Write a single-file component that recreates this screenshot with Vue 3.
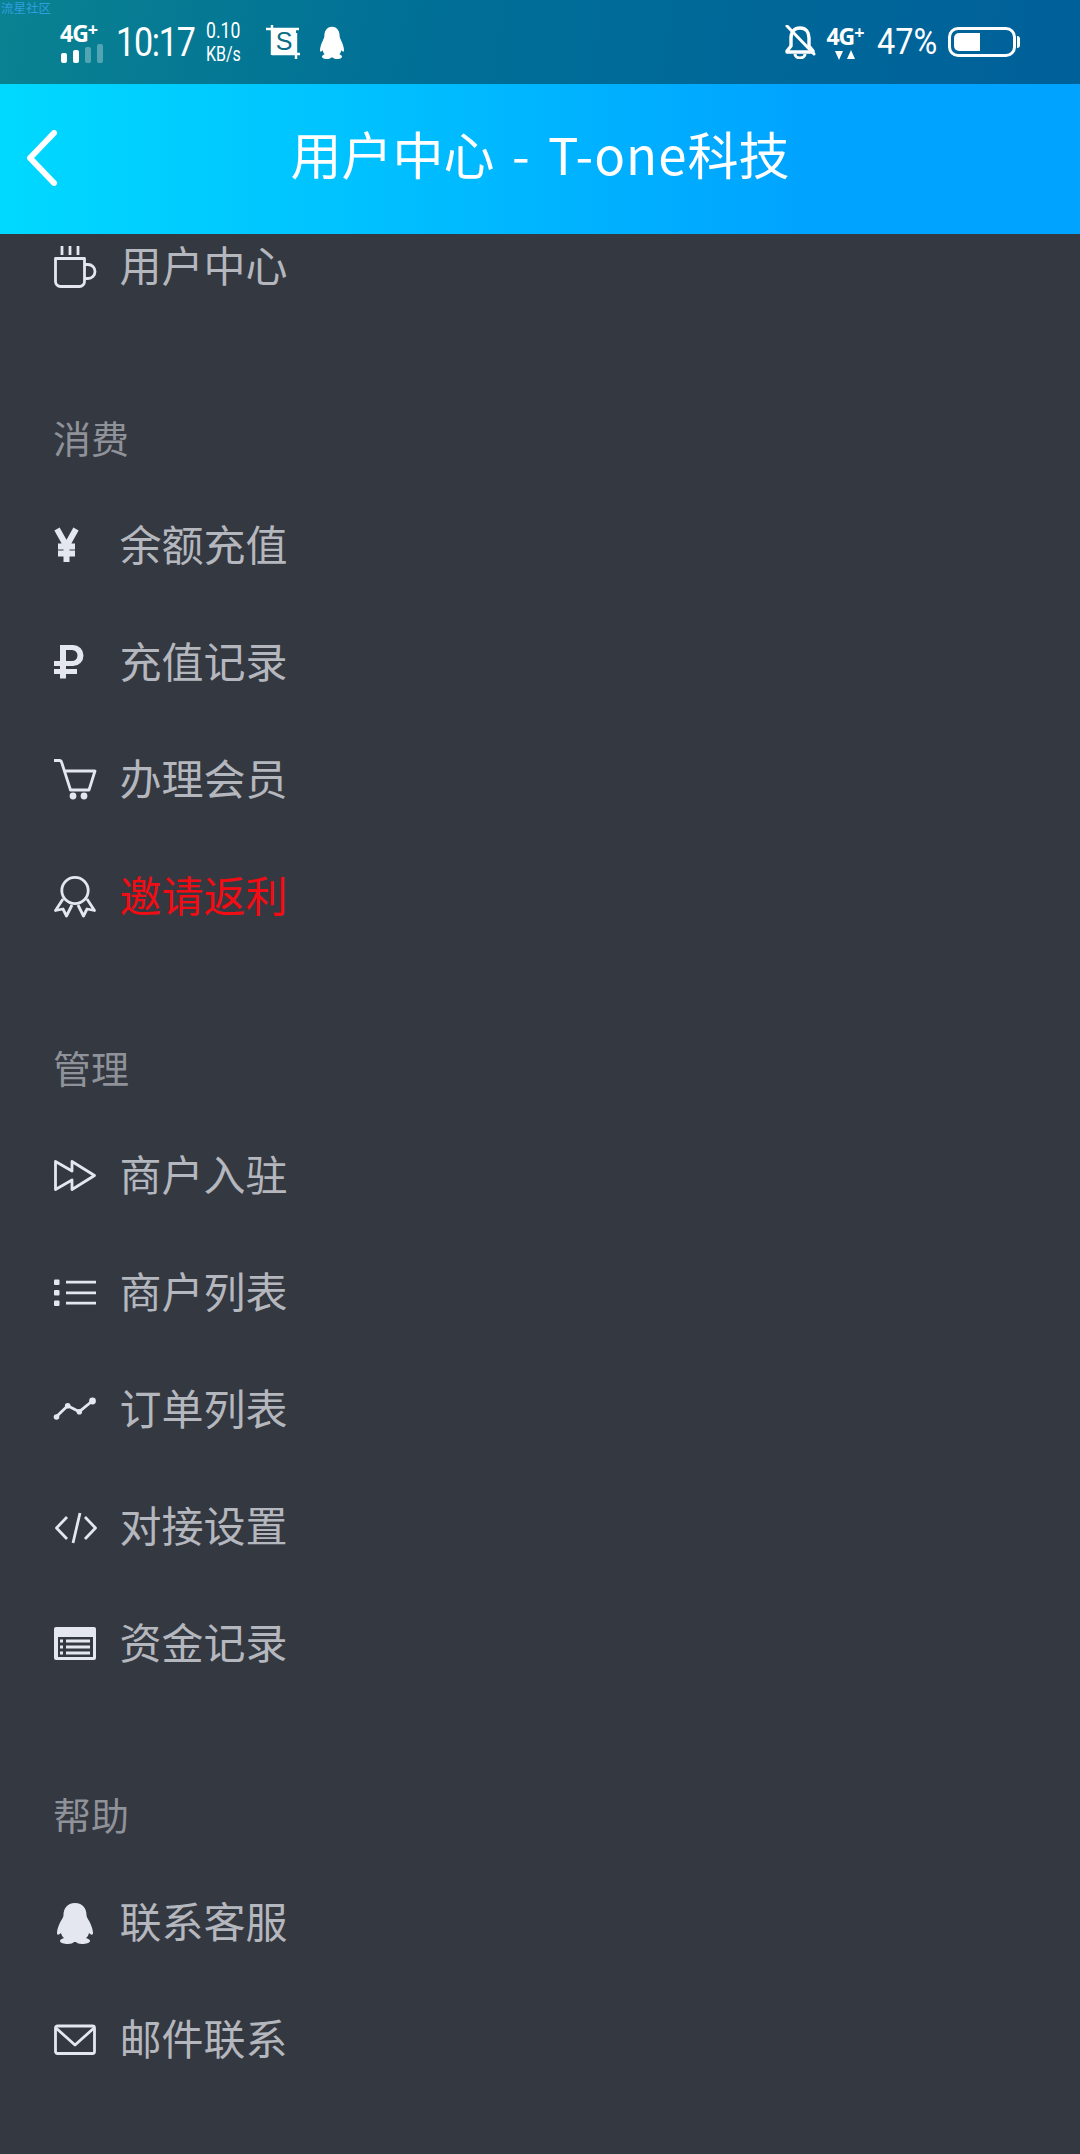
<template>
  <div class="page">
    <span class="watermark">流星社区</span>

    <div class="status-bar">
      <div class="status-group">
        <div class="network">
          <div class="net-type">4G<sup>+</sup></div>
          <svg class="signal" width="44" height="19" viewBox="0 0 44 19">
            <rect x="1" y="9" width="6" height="10" rx="2" fill="#fff" />
            <rect x="13" y="6" width="6" height="13" rx="2" fill="#fff" />
            <rect x="25" y="3" width="6" height="16" rx="2" fill="#fff" fill-opacity="0.3" />
            <rect x="37" y="0" width="6" height="19" rx="2" fill="#fff" fill-opacity="0.3" />
          </svg>
        </div>
        <span class="clock">10:17</span>
        <div class="speed">
          <span class="speed-val">0.10</span>
          <span class="speed-unit">KB/s</span>
        </div>
        <svg class="crop-icon" width="34" height="34" viewBox="0 0 34 34">
          <path d="M0 4h33M6 0v30M6 29h28M30 8v26" fill="none" stroke="#fff" stroke-width="2.4" />
          <rect x="6" y="4" width="24" height="25" fill="#fff" />
          <text x="18" y="25" text-anchor="middle" class="crop-s">S</text>
        </svg>
        <svg class="qq-status" width="28" height="33" viewBox="0 0 42 42" preserveAspectRatio="none">
          <path :d="penguin" fill="#fff" />
        </svg>
      </div>
      <div class="status-group">
        <svg class="bell" width="32" height="34" viewBox="0 0 32 34">
          <path d="M16 3c-6 0-9 4-9 10v8l-4 5v1h26v-1l-4-5v-8c0-6-3-10-9-10z" fill="none" stroke="#fff" stroke-width="3.4" stroke-linejoin="round" />
          <path d="M11 29a5 4 0 0 0 10 0" fill="none" stroke="#fff" stroke-width="3" />
          <path d="M3 1l27 28" stroke="#fff" stroke-width="3" stroke-linecap="round" />
        </svg>
        <div class="network right">
          <div class="net-type">4G<sup>+</sup></div>
          <svg width="20" height="10" viewBox="0 0 20 10">
            <polygon points="0,1 8,1 4,10" fill="#fff" />
            <polygon points="12,9 20,9 16,0" fill="#fff" />
          </svg>
        </div>
        <span class="battery-text">47%</span>
        <div class="battery">
          <div class="battery-fill" :style="{ width: batteryLevel + '%' }"></div>
        </div>
        <div class="battery-cap"></div>
      </div>
    </div>

    <header class="app-header">
      <svg class="back" width="34" height="56" viewBox="0 0 34 56">
        <path d="M28 3L4 28l24 25" fill="none" stroke="#fff" stroke-width="6" stroke-linecap="round" stroke-linejoin="round" />
      </svg>
      <h1 class="header-title">用户中心<span class="latin"> - T-one</span>科技</h1>
    </header>

    <main class="menu">
      <section v-for="(group, i) in groups" :key="i" class="group">
        <div v-if="group.title" class="group-title">{{ group.title }}</div>
        <a v-for="item in group.items" :key="item.label" class="row">
          <svg class="icon" width="42" height="42" viewBox="0 0 42 42">
            <g v-if="item.icon === 'cup'" class="line">
              <path d="M1.500 12.500h29v23a5 5 0 0 1-5 5h-19a5 5 0 0 1-5-5z" />
              <path d="M30 18.500h4a7 7 0 0 1 0 14h-4" />
              <path d="M8 0v9M16 0v9M24 0v9" />
            </g>
            <path v-else-if="item.icon === 'yen'" d="M3 4l9.500 17L22 4M12.500 20v17M4 21.500h17M4 28.500h17" class="bold" />
            <path v-else-if="item.icon === 'ruble'" fill-rule="evenodd" d="M6 3h13a10.500 10.500 0 0 1 0 21h-7v3h11v5H12v4.500H6V32H0v-5h6v-3H0v-5h6z M12 8v11h6a5.500 5.500 0 0 0 0-11z" class="solid" />
            <g v-else-if="item.icon === 'cart'">
              <path d="M0 1.500h5.500c1.200 0 1.800.6 2.200 2L16.500 31H35l6-19H10" class="line" />
              <circle cx="19" cy="37" r="3.400" class="solid" />
              <circle cx="30" cy="37" r="3.400" class="solid" />
            </g>
            <g v-else-if="item.icon === 'medal'" class="line">
              <circle cx="21" cy="14.500" r="13.200" />
              <path d="M9 23L1.500 34.500l7.500-1.500 3.500 7L18 29" />
              <path d="M33 23l7.500 11.500-7.500-1.500-3.500 7L24 29" />
            </g>
            <path v-else-if="item.icon === 'forward'" d="M1.500 6.500L18 16V6.500l22.500 14L18 34.500V25L1.500 34.500z" class="line" />
            <g v-else-if="item.icon === 'list'">
              <rect x="0" y="7.500" width="5.500" height="5.500" rx="1" class="solid" />
              <rect x="0" y="18" width="5.500" height="5.500" rx="1" class="solid" />
              <rect x="0" y="28.500" width="5.500" height="5.500" rx="1" class="solid" />
              <path d="M12 10.200h30M12 20.800h30M12 31.200h30" class="line" />
            </g>
            <g v-else-if="item.icon === 'chart'">
              <path d="M2 28l11.700-11.300 11.600 6L38.300 12" class="line" />
              <circle cx="2.500" cy="28" r="2.800" class="solid" />
              <circle cx="13.700" cy="16.700" r="2.800" class="solid" />
              <circle cx="25.300" cy="22.700" r="2.800" class="solid" />
              <circle cx="38.500" cy="12" r="3.400" class="solid" />
            </g>
            <path v-else-if="item.icon === 'code'" d="M13 11L2.500 22 13 33M31 11l10.500 11L31 33M26 7l-7 30" class="line" />
            <g v-else-if="item.icon === 'table'">
              <path fill-rule="evenodd" d="M2 4h38a2 2 0 0 1 2 2v29a2 2 0 0 1-2 2H2a2 2 0 0 1-2-2V6a2 2 0 0 1 2-2z M4 14v20h35V14z" class="solid" />
              <path d="M6 18h3M12 18h24M6 24h3M12 24h24M6 30h3M12 30h24" class="line" />
            </g>
            <path v-else-if="item.icon === 'qq'" :d="penguin" class="solid" />
            <g v-else-if="item.icon === 'mail'" class="line">
              <rect x="1.500" y="7" width="39" height="27.500" rx="2" />
              <path d="M2 9l19 17L40 9" />
            </g>
          </svg>
          <span class="label" :class="{ hot: item.hot }">{{ item.label }}</span>
        </a>
      </section>
    </main>
  </div>
</template>

<script setup>
const batteryLevel = 47

// same silhouette in the status bar and the help row
const penguin = 'M21 1C13 1 9.500 7 9.500 13C9.500 15 8.500 16 7.500 18C5.500 21 3 27 3 31C3 33 4.500 33.500 7 31C7.500 33 8.500 35 10 36C7 37 6 38 6 39C6 41 10 42 14 42C17 42 19 41 20 40L22 40C23 41 25 42 28 42C32 42 36 41 36 39C36 38 35 37 32 36C33.500 35 34.500 33 35 31C37.500 33.500 39 33 39 31C39 27 36.500 21 34.500 18C33.500 16 32.500 15 32.500 13C32.500 7 29 1 21 1Z'

const groups = [
  { items: [{ label: '用户中心', icon: 'cup' }] },
  {
    title: '消费',
    items: [
      { label: '余额充值', icon: 'yen' },
      { label: '充值记录', icon: 'ruble' },
      { label: '办理会员', icon: 'cart' },
      { label: '邀请返利', icon: 'medal', hot: true }
    ]
  },
  {
    title: '管理',
    items: [
      { label: '商户入驻', icon: 'forward' },
      { label: '商户列表', icon: 'list' },
      { label: '订单列表', icon: 'chart' },
      { label: '对接设置', icon: 'code' },
      { label: '资金记录', icon: 'table' }
    ]
  },
  {
    title: '帮助',
    items: [
      { label: '联系客服', icon: 'qq' },
      { label: '邮件联系', icon: 'mail' }
    ]
  }
]
</script>

<style>
html,
body {
  margin: 0;
  background: #343841;
}
</style>

<style scoped>
.page {
  position: relative;
  width: 1080px;
  height: 2154px;
  overflow: hidden;
  background: #343841;
  font-family: "Noto Sans CJK SC", "Noto Sans", sans-serif;
}

.watermark {
  position: absolute;
  left: 1px;
  top: 1px;
  font-size: 12.500px;
  line-height: 14px;
  color: #2f9fe0;
  z-index: 2;
}

.status-bar {
  height: 84px;
  box-sizing: border-box;
  padding: 0 60px;
  display: flex;
  justify-content: space-between;
  align-items: center;
  color: #fff;
  background: linear-gradient(100deg, #0a8291 0%, #006f97 40%, #00609a 100%);
  font-family: Roboto, sans-serif;
}

.status-group {
  display: flex;
  align-items: center;
}

.network {
  display: flex;
  flex-direction: column;
  width: 44px;
}

.network.right {
  margin-left: 9px;
  width: 40px;
  align-items: center;
  gap: 3px;
}

.net-type {
  font-family: "Noto Sans", sans-serif;
  font-size: 23px;
  line-height: 22px;
  font-weight: 700;
  letter-spacing: -1px;
  white-space: nowrap;
}

.net-type sup {
  font-size: 18px;
  line-height: 0;
  vertical-align: 6px;
}

/* the phone's status font is narrower than Roboto */
.clock {
  margin-left: 12px;
  width: 77px;
  font-size: 41px;
  letter-spacing: -1.500px;
  line-height: 44px;
  white-space: nowrap;
  transform: scaleX(0.83);
  transform-origin: left center;
}

.speed {
  margin-left: 13px;
  width: 34px;
  display: flex;
  flex-direction: column;
  align-items: flex-start;
  white-space: nowrap;
  transform: scaleX(0.8);
  transform-origin: left center;
}

.speed-val {
  font-size: 22px;
  line-height: 24px;
}

.speed-unit {
  font-size: 20px;
  line-height: 22px;
}

.crop-icon {
  margin-left: 26px;
}

.crop-s {
  font-family: "Liberation Sans", sans-serif;
  font-size: 25px;
  fill: #0b6d86;
}

.qq-status {
  margin-left: 18px;
}

.battery-text {
  margin-left: 12px;
  width: 59px;
  font-size: 36px;
  line-height: 40px;
  white-space: nowrap;
  transform: scaleX(0.9);
  transform-origin: left center;
}

.battery {
  margin-left: 12px;
  width: 68px;
  height: 30px;
  box-sizing: border-box;
  padding: 3px;
  border: 3px solid #fff;
  border-radius: 10px;
  overflow: hidden;
}

.battery-fill {
  height: 100%;
  background: #fff;
  border-radius: 5px 0 0 5px;
}

.battery-cap {
  width: 3px;
  height: 12px;
  margin-left: 1px;
  background: #fff;
  border-radius: 0 3px 3px 0;
}

.app-header {
  position: relative;
  height: 150px;
  display: flex;
  align-items: center;
  justify-content: center;
  background: linear-gradient(90deg, #00d9ff 0%, #00a3ff 75%, #00a3ff 100%);
}

.back {
  position: absolute;
  left: 26px;
  top: 46px;
}

.header-title {
  margin: 0 0 13px;
  font-size: 51px;
  font-weight: 400;
  color: #fff;
  white-space: pre;
  line-height: 70px;
}

.latin {
  letter-spacing: 1px;
  word-spacing: 5px;
}

.menu {
  margin-top: -25.500px;
}

.group-title {
  box-sizing: border-box;
  height: 162px;
  padding: 76.500px 53px 0;
  font-size: 38px;
  line-height: 70px;
  color: #8f9299;
}

.row {
  display: flex;
  align-items: center;
  height: 117px;
  padding-left: 54px;
}

.icon {
  flex: none;
  margin-right: 23.500px;
  overflow: visible;
}

.label {
  position: relative;
  top: -3.500px;
  font-size: 42px;
  color: #b4b7bd;
}

.label.hot {
  color: #f20c14;
}

.line {
  fill: none;
  stroke: #e4e7ef;
  stroke-width: 2.800;
  stroke-linejoin: round;
}

.solid {
  fill: #e4e7ef;
}

.bold {
  fill: none;
  stroke: #e4e7ef;
  stroke-width: 6;
}
</style>
